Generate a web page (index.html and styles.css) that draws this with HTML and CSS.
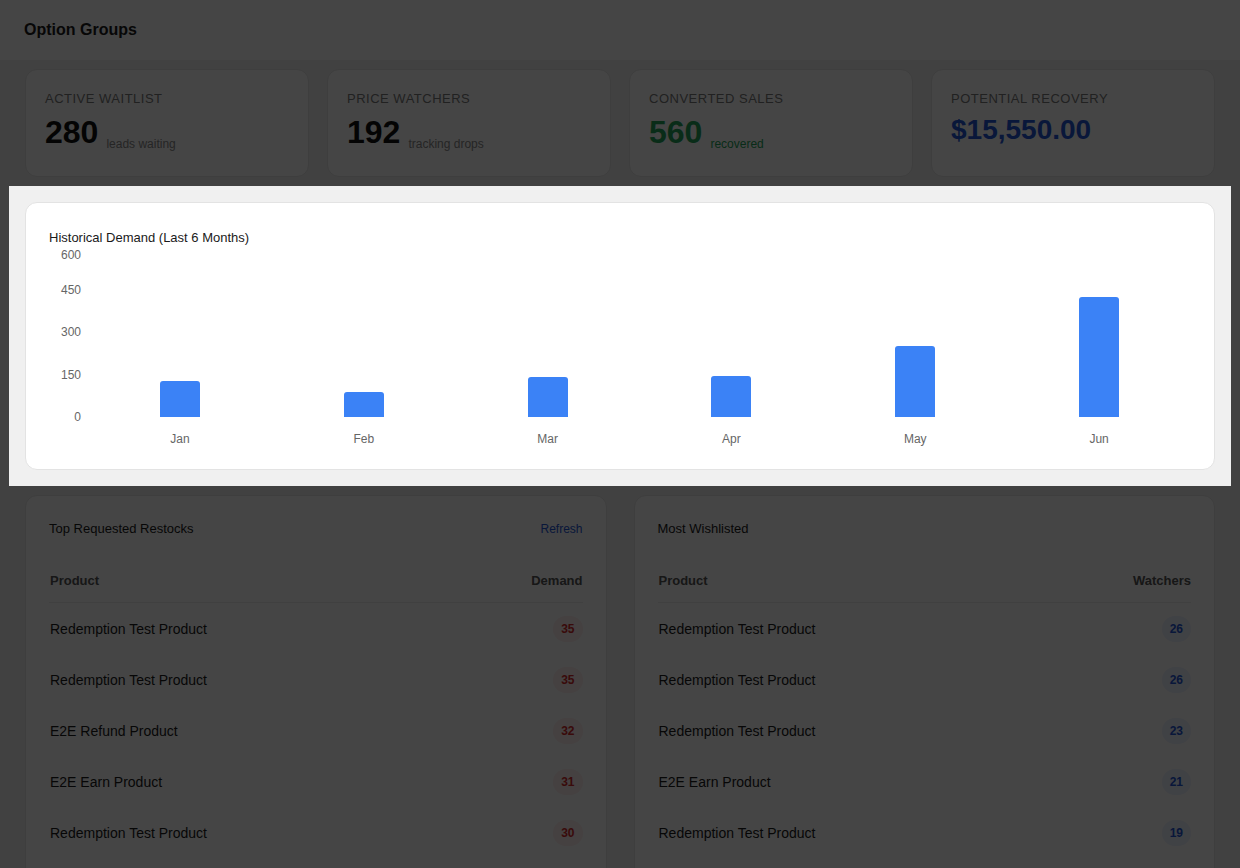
FILE: index.html
```html
<!DOCTYPE html>
<html>
  <head>
    <title>Option Groups</title>
    <link rel="stylesheet" href="styles.css">
  </head>

  <body>

    <header class="topbar">
      <h1>Option Groups</h1>
    </header>

    <main class="page">

      <!-- summary cards -->
      <section class="stats">
        <div class="stat">
          <div class="stat-label">Active Waitlist</div>
          <div class="stat-value"><b>280</b><span>leads waiting</span></div>
        </div>
        <div class="stat">
          <div class="stat-label">Price Watchers</div>
          <div class="stat-value"><b>192</b><span>tracking drops</span></div>
        </div>
        <div class="stat">
          <div class="stat-label">Converted Sales</div>
          <div class="stat-value green"><b>560</b><span>recovered</span></div>
        </div>
        <div class="stat">
          <div class="stat-label">Potential Recovery</div>
          <div class="stat-value blue"><b class="money">$15,550.00</b></div>
        </div>
      </section>

      <!-- chart, highlighted by the tour -->
      <section class="chart-wrap">
        <div class="card chart-card">
          <h2 class="card-title">Historical Demand (Last 6 Months)</h2>
          <div class="chart">
            <div class="y-axis">
              <span class="tick top">600</span>
              <span class="tick" style="bottom: 75%">450</span>
              <span class="tick" style="bottom: 50%">300</span>
              <span class="tick" style="bottom: 25%">150</span>
              <span class="tick" style="bottom: 0%">0</span>
            </div>
            <div class="plot">
              <div class="col"><div class="bar" style="height: 21.2%"></div></div>
              <div class="col"><div class="bar" style="height: 14.7%"></div></div>
              <div class="col"><div class="bar" style="height: 23.5%"></div></div>
              <div class="col"><div class="bar" style="height: 24.2%"></div></div>
              <div class="col"><div class="bar" style="height: 41.7%"></div></div>
              <div class="col"><div class="bar" style="height: 70.6%"></div></div>
            </div>
            <div></div>
            <div class="x-axis">
              <span>Jan</span><span>Feb</span><span>Mar</span><span>Apr</span><span>May</span><span>Jun</span>
            </div>
          </div>
        </div>
        <div class="tour-spotlight"></div>
      </section>

      <!-- lists -->
      <section class="lists">
        <div class="card list-card">
          <div class="list-head">
            <h2 class="card-title">Top Requested Restocks</h2>
            <a class="refresh" href="#">Refresh</a>
          </div>
          <table>
            <thead>
              <tr><th>Product</th><th class="num">Demand</th></tr>
            </thead>
            <tbody>
              <tr><td>Redemption Test Product</td><td class="num"><span class="badge red">35</span></td></tr>
              <tr><td>Redemption Test Product</td><td class="num"><span class="badge red">35</span></td></tr>
              <tr><td>E2E Refund Product</td><td class="num"><span class="badge red">32</span></td></tr>
              <tr><td>E2E Earn Product</td><td class="num"><span class="badge red">31</span></td></tr>
              <tr><td>Redemption Test Product</td><td class="num"><span class="badge red">30</span></td></tr>
            </tbody>
          </table>
        </div>

        <div class="card list-card">
          <div class="list-head">
            <h2 class="card-title">Most Wishlisted</h2>
          </div>
          <table>
            <thead>
              <tr><th>Product</th><th class="num">Watchers</th></tr>
            </thead>
            <tbody>
              <tr><td>Redemption Test Product</td><td class="num"><span class="badge blue">26</span></td></tr>
              <tr><td>Redemption Test Product</td><td class="num"><span class="badge blue">26</span></td></tr>
              <tr><td>Redemption Test Product</td><td class="num"><span class="badge blue">23</span></td></tr>
              <tr><td>E2E Earn Product</td><td class="num"><span class="badge blue">21</span></td></tr>
              <tr><td>Redemption Test Product</td><td class="num"><span class="badge blue">19</span></td></tr>
            </tbody>
          </table>
        </div>
      </section>

    </main>

  </body>
</html>
```

FILE: styles.css
```css
html, body {
  margin: 0;
  /* tour is running, page does not scroll */
  overflow: hidden;
}

body {
  font-family: "Liberation Sans", Arial, sans-serif;
  background-color: #f0f0f0;
  color: #1a1a1a;
}

.topbar {
  height: 60px;
  background-color: #fff;
  display: flex;
  align-items: center;
  padding: 0 24px;
  box-sizing: border-box;
}
.topbar h1 {
  margin: 0;
  font-size: 16px;
  font-weight: bold;
  color: #1a1a1a;
}

.page {
  padding: 9px 25px;
}

/* cards */
.card, .stat {
  background-color: #fff;
  border: 1px solid #e3e3e3;
  border-radius: 12px;
  box-sizing: border-box;
}

.stats {
  display: grid;
  grid-template-columns: repeat(4, 1fr);
  gap: 18px;
}
.stat {
  padding: 20px 19px 25px;
}
.stat-label {
  font-size: 13px;
  line-height: 18px;
  text-transform: uppercase;
  letter-spacing: 0.5px;
  color: #7a7a7a;
}
.stat-value {
  display: flex;
  align-items: flex-end;
  gap: 8px;
  margin-top: 6px;
  color: #111;
}
.stat-value b {
  font-size: 32px;
}
.stat-value b.money {
  font-size: 28px;
}
.stat-value span {
  font-size: 12px;
  color: #8a8a8a;
}
.stat-value.green, .stat-value.green span { color: #22a35a; }
.stat-value.blue { color: #2456d6; }

.card-title {
  margin: 0;
  font-size: 13px;
  font-weight: normal;
  color: #1a1a1a;
}

/* chart */
.chart-wrap {
  position: relative;
  margin-top: 25px;
}
.chart-card {
  padding: 27px 23px 23px;
}
.chart-card .card-title {
  line-height: 16px;
}
.chart {
  display: grid;
  grid-template-columns: 39px 1fr;
  grid-template-rows: 170px auto;
  margin-top: 1px;
}
.y-axis {
  position: relative;
}
.tick {
  position: absolute;
  right: 7px;
  font-size: 12px;
  line-height: 14px;
  color: #666;
  transform: translateY(50%);
}
.tick.top {
  top: 1px;
  transform: none;
}
.plot {
  display: grid;
  grid-template-columns: repeat(6, 1fr);
}
.col {
  display: flex;
  align-items: flex-end;
  justify-content: center;
}
.bar {
  width: 40px;
  background-color: #3b82f6;
  border-radius: 3px 3px 0 0;
}
.x-axis {
  display: grid;
  grid-template-columns: repeat(6, 1fr);
  margin-top: 15px;
  font-size: 12px;
  line-height: 14px;
  color: #666;
  text-align: center;
}

/* dim everything but the chart */
.tour-spotlight {
  position: absolute;
  top: -16px;
  left: -16px;
  right: -16px;
  bottom: -16px;
  box-shadow: 0 0 0 3000px rgba(0, 0, 0, 0.73);
  pointer-events: none;
  z-index: 10;
}

/* lists */
.lists {
  display: grid;
  grid-template-columns: 1fr 1fr;
  gap: 27px;
  margin-top: 25px;
}
.list-card {
  padding: 24px 23px 23px;
}
.list-head {
  display: flex;
  justify-content: space-between;
  align-items: center;
  line-height: 18px;
}
.refresh {
  font-size: 12px;
  color: #2456d6;
  text-decoration: none;
}
table {
  width: 100%;
  border-collapse: collapse;
  margin-top: 23px;
}
th {
  text-align: left;
  font-size: 13px;
  line-height: 15px;
  font-weight: bold;
  color: #555;
  padding: 12px 0 14px 1px;
  border-bottom: 1px solid #ebebeb;
}
td {
  height: 51px;
  padding: 0 0 0 1px;
  font-size: 14px;
  color: #1a1a1a;
}
.num {
  text-align: right;
}
.badge {
  display: inline-block;
  font-size: 12px;
  font-weight: bold;
  line-height: 16px;
  padding: 5px 8px;
  border-radius: 999px;
}
.badge.red {
  color: #d42a2a;
  background-color: #fdeeee;
}
.badge.blue {
  color: #2456d6;
  background-color: #edf2fd;
}
```
